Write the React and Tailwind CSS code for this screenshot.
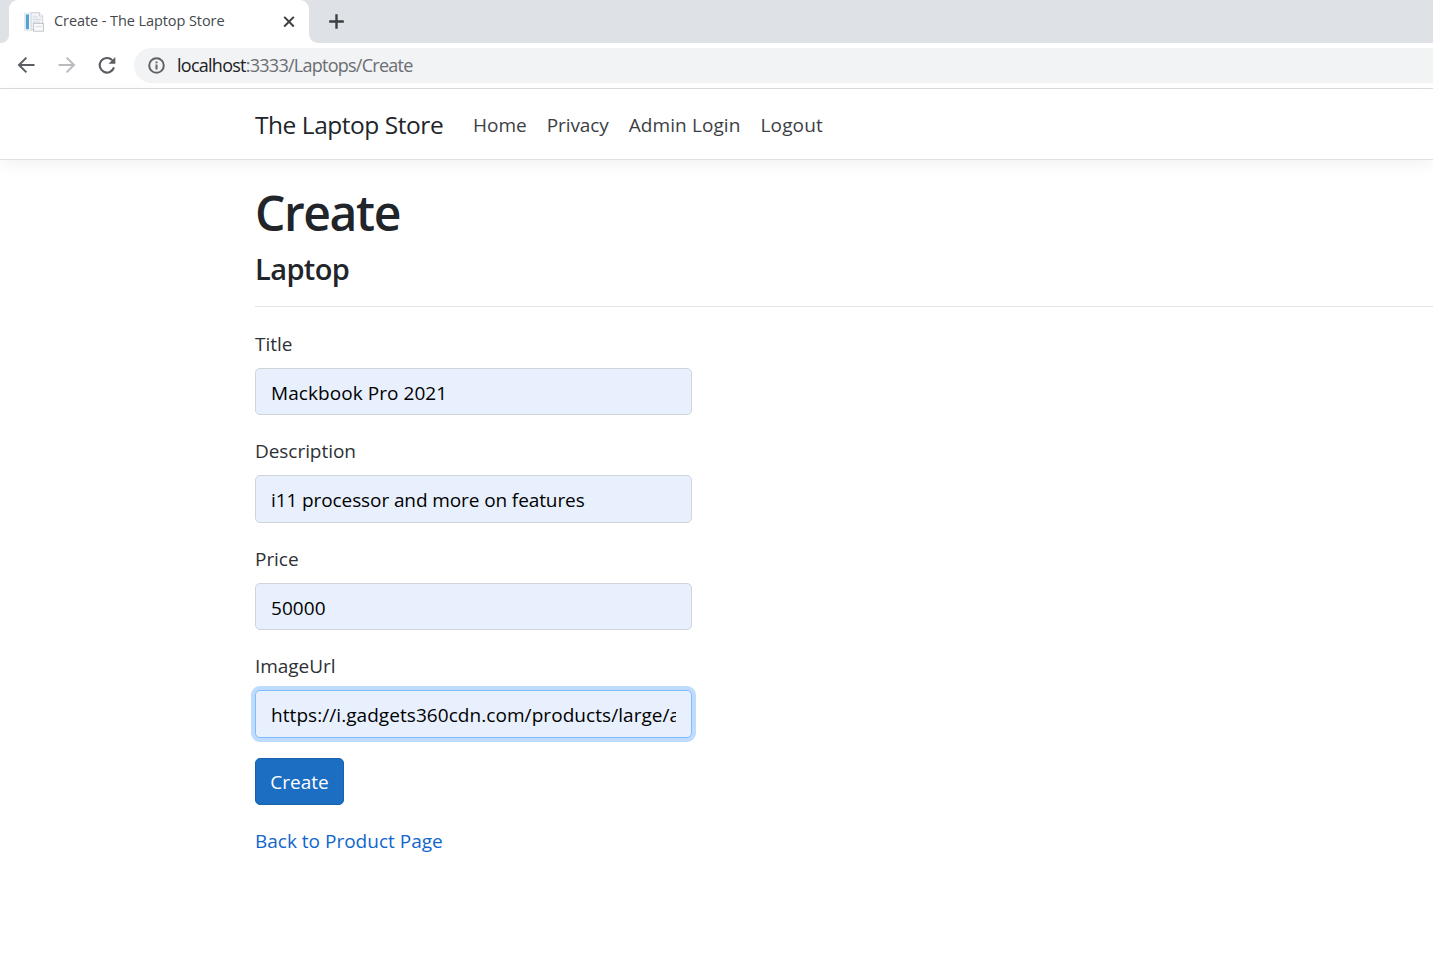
function TabStrip() {
  return (
    <div className="flex h-[43px] bg-[#dee1e6]">
      <div className="flex w-[9px] bg-white">
        <div className="h-[43px] w-full rounded-br-[8px] bg-[#dee1e6]" />
      </div>
      <div className="flex h-full w-[300px] items-center rounded-t-[9px] bg-white pl-[15px] pr-[12px]">
        <svg className="h-[20px] w-[20px] shrink-0" viewBox="0 0 20 20">
          <rect x="0.5" y="1" width="12" height="17.5" fill="#f6f7f8" stroke="#e3e6ea" strokeWidth="0.8" />
          <rect x="1.8" y="2.4" width="3.2" height="14.8" fill="#56a3d6" />
          <path d="M7 0.6h8.5l3.2 3.4v13.6H7z" fill="#f1f2f5" stroke="#ccd0d7" strokeWidth="0.9" />
          <path d="M15.5 0.6V4h3.2" fill="#fff" stroke="#c3c7cf" strokeWidth="0.8" />
          <path d="M8.8 5h5M8.8 7.5h8M8.8 10h7" stroke="#d3d8e4" strokeWidth="1.1" />
          <rect x="9.6" y="11.4" width="9.8" height="7.8" fill="#f8f9fa" stroke="#bdc1c8" strokeWidth="0.9" />
          <path d="M11.4 14.6h6" stroke="#d5d9e0" strokeWidth="1" />
        </svg>
        <span className="ml-[10px] flex-1 whitespace-nowrap pb-[2px] text-[14.5px] leading-5 tracking-[-0.08px] text-[#45484c]">
          Create - The Laptop Store
        </span>
        <svg className="h-[16px] w-[16px]" viewBox="0 0 16 16" fill="none" stroke="#3c4043" strokeWidth="2">
          <path d="M3.2 2.9l9.6 9.6M12.8 2.9l-9.6 9.6" />
        </svg>
      </div>
      <div className="flex flex-1 bg-white">
        <div className="flex h-full flex-1 items-center rounded-bl-[9px] bg-[#dee1e6] pl-[19px]">
          <svg className="h-[16px] w-[17px]" viewBox="0 0 17 16" fill="none" stroke="#3c4043" strokeWidth="2.4">
            <path d="M8.5 0.2v14.6M1.2 7.5h14.6" />
          </svg>
        </div>
      </div>
    </div>
  );
}

function Toolbar() {
  return (
    <div className="flex h-[46px] items-center border-b border-[#d9dbde] bg-white pl-[16px]">
      <svg className="h-[20px] w-[20px]" viewBox="0 0 20 20" fill="none" stroke="#5a5d61" strokeWidth="2">
        <path d="M18.5 9H3.4M10.4 1.6L3 9l7.4 7.4" />
      </svg>
      <svg className="ml-[21px] h-[20px] w-[20px]" viewBox="0 0 20 20" fill="none" stroke="#b9bbbe" strokeWidth="2">
        <path d="M1.5 9h15.1M9.6 1.6L17 9l-7.4 7.4" />
      </svg>
      <svg className="ml-[20px] h-[20px] w-[20px]" viewBox="0 0 20 20">
        <path d="M17 11.4A7.3 7.3 0 1 1 15.2 4.1" fill="none" stroke="#5a5d61" strokeWidth="2.1" />
        <path d="M18.3 1v6.8h-6.8z" fill="#5a5d61" />
      </svg>
      <div className="ml-[17px] flex h-[35px] flex-1 items-center rounded-l-full bg-[#f1f3f4] pl-[14px]">
        <svg className="h-[17px] w-[17px]" viewBox="0 0 17 17" fill="none" stroke="#5f6368">
          <circle cx="8.5" cy="8.5" r="7.3" strokeWidth="2" />
          <path d="M8.5 7.6v4.8M8.5 4.4v1.9" strokeWidth="2" />
        </svg>
        <span className="ml-[12px] whitespace-nowrap pb-[2px] text-[18px] leading-6 tracking-[-0.74px] text-[#6b6e73]">
          <span className="text-[#202124]">localhost</span>:3333/Laptops/Create
        </span>
      </div>
    </div>
  );
}

function Navbar() {
  return (
    <header className="flex h-[71px] items-center border-b border-[#dee2e6] bg-white pl-[255px] shadow-[0_5px_15px_rgba(0,0,0,0.05)]">
      <a className="w-[218px] whitespace-nowrap text-[24.5px] leading-[37px] tracking-[-0.46px] text-[#212529]">The Laptop Store</a>
      <nav className="flex gap-[20px] whitespace-nowrap pt-[2px] text-[19px] leading-[30px] text-[#3c4044]">
        <a>Home</a>
        <a className="tracking-[-0.1px]">Privacy</a>
        <a className="tracking-[0.1px]">Admin Login</a>
        <a className="tracking-[0.15px]">Logout</a>
      </nav>
    </header>
  );
}

function Field({ label, value, focused }) {
  return (
    <div className="mb-[20px]">
      <label className="mb-[9px] block pt-[1px] text-[19px] leading-[30px] tracking-[-0.05px] text-[#2d3135]">{label}</label>
      <input
        readOnly
        defaultValue={value}
        className={
          "block h-[47.5px] w-[437px] rounded-[5px] border bg-[#e8f0fe] px-[15px] pt-[2.8px] text-[19px] text-black outline-none " +
          (value.includes(" and ") ? "tracking-[-0.1px] " : "tracking-[0.06px] ") +
          (focused ? "border-[#80bdff] shadow-[0_0_0_4px_#bfdcff]" : "border-[#ced4da]")
        }
      />
    </div>
  );
}

export default function App() {
  return (
    <div className="flex h-[979px] w-full flex-col overflow-hidden bg-white font-['Open_Sans','Noto_Sans',sans-serif]">
      <TabStrip />
      <Toolbar />
      <Navbar />
      <main className="pl-[255px] pt-[23px]">
        <h1 className="mb-[8px] text-[48px] font-semibold leading-[60px] tracking-[-1.4px] text-[#212529]">Create</h1>
        <h4 className="text-[29px] font-semibold leading-[36px] tracking-[-0.6px] text-[#212529]">Laptop</h4>
        <hr className="mb-[20.6px] mt-[19px] border-t border-[#e3e4e5]" />
        <form>
          <Field label="Title" value="Mackbook Pro 2021" />
          <Field label="Description" value="i11 processor and more on features" />
          <Field label="Price" value="50000" />
          <Field label="ImageUrl" value="https://i.gadgets360cdn.com/products/large/apple" focused />
          <button
            type="button"
            className="mb-[21px] block h-[47px] w-[89px] rounded-[5px] border border-[#1861ac] bg-[#1b6ec2] pt-[2px] text-[19px] text-white"
          >
            Create
          </button>
        </form>
        <a className="block text-[19px] leading-[30px] text-[#0f66cc]">Back to Product Page</a>
      </main>
    </div>
  );
}
